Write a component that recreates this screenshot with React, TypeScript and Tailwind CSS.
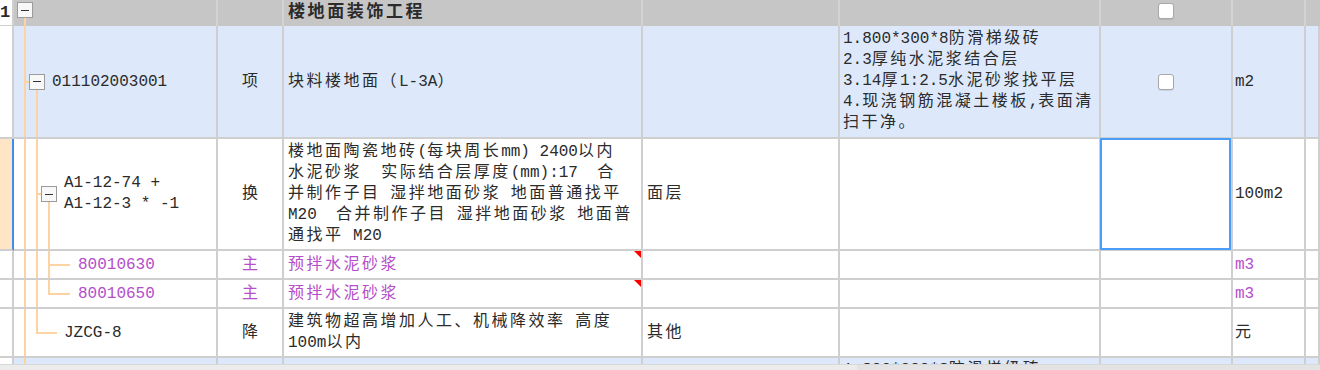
import type { ReactNode } from "react";

// column template shared by every row of the grid
const cols = "grid grid-cols-[14px_204px_66px_359px_197px_261px_132px_73px_1fr]";
const cell = "relative border-r-2 border-b-2 border-[#cfcfcf]";

// CJK runs get extra tracking so they sit on the wider grid of the original font
function Txt({ s }: { s: string }) {
  const parts = s.split(/([\u2e80-\u9fff\uff00-\uffef]+)/);
  return (
    <>
      {parts.map((p, i) =>
        i % 2 === 1 ? (
          <span key={i} className="tracking-[2.5px]">
            {p}
          </span>
        ) : (
          <span key={i}>{p}</span>
        )
      )}
    </>
  );
}

function Lines({ lines }: { lines: string[] }) {
  return (
    <div className="whitespace-pre leading-[21px]">
      {lines.map((l, i) => (
        <div key={i}>
          <Txt s={l} />
        </div>
      ))}
    </div>
  );
}

function MinusBox() {
  return (
    <div className="flex h-[16px] w-[16px] shrink-0 items-center justify-center border border-[#9b9b9b] bg-[#f8f8f8]">
      <div className="h-[1px] w-[8px] bg-[#333]" />
    </div>
  );
}

function CheckBox() {
  return <div className="h-[16px] w-[16px] rounded-[3px] border border-[#a8a8a8] bg-white shadow-[0_1px_1px_rgba(0,0,0,0.1)]" />;
}

function VLine({ left, part = "full" }: { left: "a" | "b" | "c"; part?: "full" | "top" | "bottom" }) {
  const x = left === "a" ? "left-[10px]" : left === "b" ? "left-[22px]" : "left-[34px]";
  const y =
    part === "full" ? "top-0 bottom-0" : part === "top" ? "top-0 h-[calc(50%+1px)]" : "top-[calc(50%+8px)] bottom-0";
  return <div className={`absolute w-[2px] bg-[#fcd3a1] ${x} ${y}`} />;
}

function HLine({ cls }: { cls: string }) {
  return <div className={`absolute top-[calc(50%-1px)] h-[2px] bg-[#fcd3a1] ${cls}`} />;
}

function RedMark() {
  return (
    <svg className="absolute right-0 top-0" width="7" height="7" viewBox="0 0 7 7">
      <polygon points="0,0 7,0 7,7" fill="#ff0000" />
    </svg>
  );
}

function Center({ children }: { children: ReactNode }) {
  return <div className={`${cell} flex items-center justify-center`}>{children}</div>;
}

function Left({ children, pad = "pl-[4px]" }: { children: ReactNode; pad?: string }) {
  return <div className={`${cell} flex items-center ${pad}`}>{children}</div>;
}

export default function App() {
  const purple = "text-[#b44ecb]";

  return (
    <div className="h-[370px] w-[1320px] overflow-hidden bg-white font-['Liberation_Mono','Noto_Sans_CJK_SC',monospace] text-[16px] text-[#2b2b2b]">
      <div className="h-[364px] overflow-hidden">
        {/* group header */}
        <div className={`${cols} h-[26px] bg-[#c6c6c6]`}>
          <div className="flex items-center border-r-2 border-b border-[#cfcfcf] bg-white text-[17px] font-bold leading-none">1</div>
          <div className="relative border-r-2 border-[#d3d3d3] pl-[3px] pt-[2px]">
            <MinusBox />
            <div className="absolute left-[10px] top-[18px] bottom-0 w-[2px] bg-[#fcd3a1]" />
          </div>
          <div className="border-r-2 border-[#d3d3d3]" />
          <div className="flex items-center border-r-2 border-[#d3d3d3] pl-[4px] text-[17px] font-bold">
            <span className="tracking-[2.6px]">楼地面装饰工程</span>
          </div>
          <div className="border-r-2 border-[#d3d3d3]" />
          <div className="border-r-2 border-[#d3d3d3]" />
          <div className="flex items-start justify-center border-r-2 border-[#d3d3d3] pt-[3px]">
            <CheckBox />
          </div>
          <div className="border-r-2 border-[#d3d3d3]" />
          <div />
        </div>

        {/* bill item */}
        <div className={`${cols} h-[113px] bg-[#dde9fb]`}>
          <div className={`${cell} bg-white`} />
          <div className={`${cell} flex items-center`}>
            <VLine left="a" />
            <HLine cls="left-[10px] w-[5px]" />
            <VLine left="b" part="bottom" />
            <div className="ml-[15px]">
              <MinusBox />
            </div>
            <span className="ml-[7px]">011102003001</span>
          </div>
          <Center>项</Center>
          <Left>
            <Txt s="块料楼地面（L-3A）" />
          </Left>
          <div className={cell} />
          <Left pad="pl-[3px]">
            <Lines
              lines={[
                "1.800*300*8防滑梯级砖",
                "2.3厚纯水泥浆结合层",
                "3.14厚1:2.5水泥砂浆找平层",
                "4.现浇钢筋混凝土楼板,表面清",
                "扫干净。",
              ]}
            />
          </Left>
          <Center>
            <CheckBox />
          </Center>
          <Left pad="pl-[2px]">m2</Left>
          <div className={cell} />
        </div>

        {/* quota, selected row */}
        <div className={`${cols} h-[112px] bg-white`}>
          <div className="border-r-2 border-b-2 border-b-[#cfcfcf] border-r-[#3d8ef0] bg-[#fde5c6]" />
          <div className={`${cell} flex items-center`}>
            <VLine left="a" />
            <VLine left="b" />
            <HLine cls="left-[22px] w-[5px]" />
            <VLine left="c" part="bottom" />
            <div className="ml-[27px]">
              <MinusBox />
            </div>
            <div className="ml-[7px]">
              <Lines lines={["A1-12-74 +", "A1-12-3 * -1"]} />
            </div>
          </div>
          <Center>换</Center>
          <Left>
            <Lines
              lines={[
                "楼地面陶瓷地砖(每块周长mm) 2400以内",
                "水泥砂浆  实际结合层厚度(mm):17  合",
                "并制作子目 湿拌地面砂浆 地面普通找平",
                "M20  合并制作子目 湿拌地面砂浆 地面普",
                "通找平 M20",
              ]}
            />
          </Left>
          <Left>
            <Txt s="面层" />
          </Left>
          <div className={cell} />
          <div className={cell}>
            <div className="absolute -left-[1px] -top-[1px] -bottom-[1px] right-0 border-2 border-[#4a9df8]" />
          </div>
          <Left pad="pl-[2px]">100m2</Left>
          <div className={cell} />
        </div>

        {/* materials */}
        {["80010630", "80010650"].map((code, i) => (
          <div key={code} className={`${cols} h-[29px] bg-white`}>
            <div className={cell} />
            <div className={`${cell} flex items-center`}>
              <VLine left="a" />
              <VLine left="b" />
              <VLine left="c" part={i === 0 ? "full" : "top"} />
              <HLine cls="left-[34px] w-[22px]" />
              <span className={`pl-[64px] ${purple}`}>{code}</span>
            </div>
            <Center>
              <span className={purple}>主</span>
            </Center>
            <Left>
              <span className={purple}>
                <Txt s="预拌水泥砂浆" />
              </span>
              <RedMark />
            </Left>
            <div className={cell} />
            <div className={cell} />
            <div className={cell} />
            <Left pad="pl-[2px]">
              <span className={purple}>m3</span>
            </Left>
            <div className={cell} />
          </div>
        ))}

        {/* height surcharge */}
        <div className={`${cols} h-[49px] bg-white`}>
          <div className={cell} />
          <div className={`${cell} flex items-center`}>
            <VLine left="a" />
            <VLine left="b" part="top" />
            <HLine cls="left-[22px] w-[21px]" />
            <span className="pl-[50px]">JZCG-8</span>
          </div>
          <Center>降</Center>
          <Left>
            <Lines lines={["建筑物超高增加人工、机械降效率 高度", "100m以内"]} />
          </Left>
          <Left>
            <Txt s="其他" />
          </Left>
          <div className={cell} />
          <div className={cell} />
          <Left pad="pl-[2px]">
            <Txt s="元" />
          </Left>
          <div className={cell} />
        </div>

        {/* next bill item, cut by the scrollbar */}
        <div className={`${cols} h-[30px] bg-[#dde9fb]`}>
          <div className={`${cell} bg-white`} />
          <div className={cell}>
            <VLine left="a" />
          </div>
          <div className={cell} />
          <div className={cell} />
          <div className={cell} />
          <div className={`${cell} pl-[3px] pt-[2px]`}>
            <Lines lines={["1.800*300*8防滑梯级砖"]} />
          </div>
          <div className={cell} />
          <div className={cell} />
          <div className={cell} />
        </div>
      </div>

      {/* horizontal scrollbar */}
      <div className="flex h-[6px] border-t border-[#d8d8d8]">
        <div className="w-[857px] bg-[#ececec]" />
        <div className="flex-1 bg-[#e3e3e3]" />
      </div>
    </div>
  );
}
